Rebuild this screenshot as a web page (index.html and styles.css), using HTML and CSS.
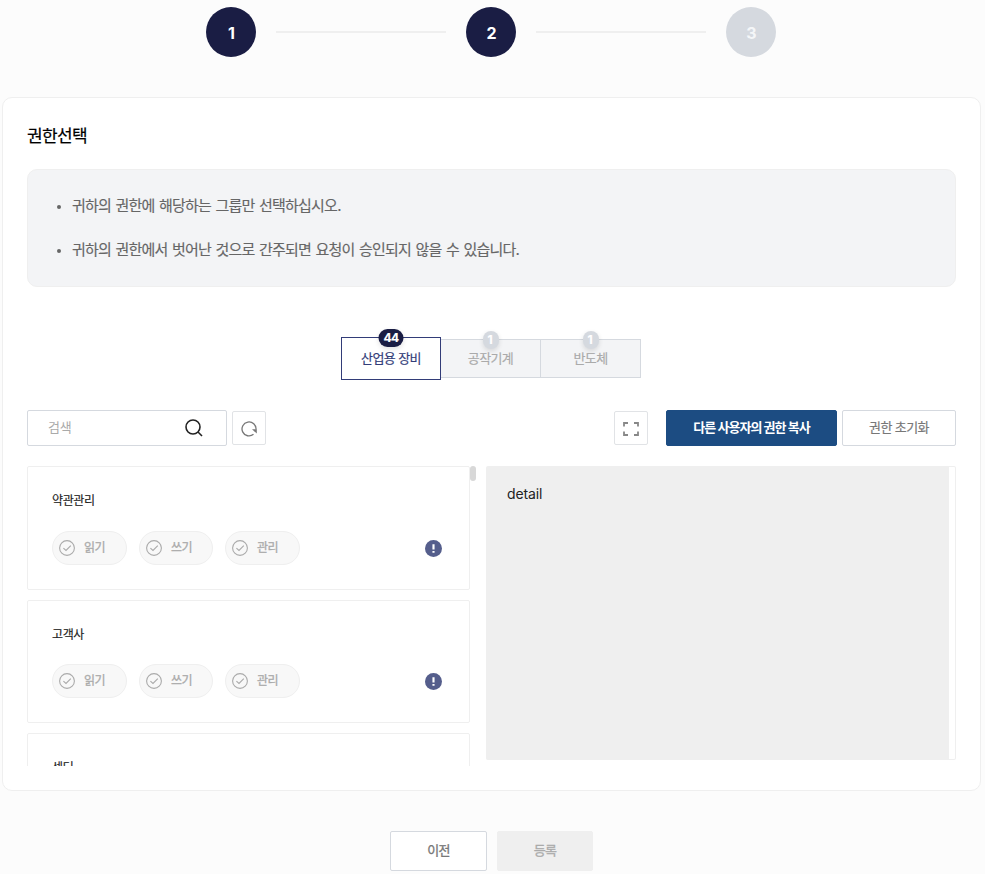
FILE: index.html
```html
<!DOCTYPE html>
<html lang="ko">
<head>
<meta charset="utf-8">
<title>권한선택</title>
<link rel="stylesheet" href="styles.css">
</head>
<body>
<svg class="sprite" aria-hidden="true">
  <symbol id="check" viewBox="0 0 16 16"><circle cx="8" cy="8" r="7.4"/><path d="M4.4 8.1 7 10.5 11.8 5.6"/></symbol>
</svg>
<ol class="steps">
  <li class="step done">1</li>
  <li class="line"></li>
  <li class="step done">2</li>
  <li class="line"></li>
  <li class="step">3</li>
</ol>
<main class="card">
  <h1 class="title">권한선택</h1>
  <ul class="notice">
    <li><span>귀하의 권한에 해당하는 그룹만 선택하십시오.</span></li>
    <li><span>귀하의 권한에서 벗어난 것으로 간주되면 요청이 승인되지 않을 수 있습니다.</span></li>
  </ul>
  <nav class="tabs">
    <a class="tab active"><span class="badge">44</span><span>산업용 장비</span></a>
    <a class="tab"><span class="badge">1</span><span>공작기계</span></a>
    <a class="tab"><span class="badge">1</span><span>반도체</span></a>
  </nav>
  <div class="toolbar">
    <div class="search">
      <span>검색</span>
      <svg width="18" height="18" viewBox="0 0 18 18"><circle cx="8" cy="8" r="7"/><path d="M13 13 17 17"/></svg>
    </div>
    <button class="icon-btn refresh"><svg width="16" height="16" viewBox="0 0 16 16"><path d="M12.5 13.3A7 7 0 1 1 15 8.5"/><path class="fill" d="M11 8.3H15.8V12.6Z"/></svg></button>
    <button class="icon-btn expand"><svg width="16" height="14" viewBox="0 0 16 14"><path d="M1 4.5V1H5M11 1H15V4.5M15 9.5V13H11M5 13H1V9.5"/></svg></button>
    <button class="btn primary"><span>다른 사용자의 권한 복사</span></button>
    <button class="btn reset"><span>권한 초기화</span></button>
  </div>
  <div class="panes">
    <div class="list">
      <div class="items">
        <section class="item">
          <h2>약관관리</h2>
          <div class="row">
            <span class="pill"><svg><use href="#check"/></svg><span>읽기</span></span>
            <span class="pill mid"><svg><use href="#check"/></svg><span>쓰기</span></span>
            <span class="pill"><svg><use href="#check"/></svg><span>관리</span></span>
            <svg class="info" width="17" height="17" viewBox="0 0 16 16"><circle cx="8" cy="8" r="8"/><path d="M7 4H9V9H7ZM7 10.3H9V12H7Z"/></svg>
          </div>
        </section>
        <section class="item second">
          <h2>고객사</h2>
          <div class="row">
            <span class="pill"><svg><use href="#check"/></svg><span>읽기</span></span>
            <span class="pill mid"><svg><use href="#check"/></svg><span>쓰기</span></span>
            <span class="pill"><svg><use href="#check"/></svg><span>관리</span></span>
            <svg class="info" width="17" height="17" viewBox="0 0 16 16"><circle cx="8" cy="8" r="8"/><path d="M7 4H9V9H7ZM7 10.3H9V12H7Z"/></svg>
          </div>
        </section>
        <section class="item">
          <h2>센터</h2>
        </section>
      </div>
      <div class="thumb"></div>
    </div>
    <div class="detail"><div class="detail-body">detail</div></div>
  </div>
</main>
<footer class="actions">
  <button class="btn prev"><span>이전</span></button>
  <button class="btn submit"><span>등록</span></button>
</footer>
</body>
</html>
```
FILE: styles.css
```css
* { box-sizing: border-box; }
body {
  margin: 0;
  height: 874px;
  overflow: hidden;
  background: #fcfcfc;
  color: #111;
  font-family: Inter, "Noto Sans CJK KR", sans-serif;
  font-size: 13px;
  letter-spacing: -0.6px;
}
.sprite { display: none; }
svg { fill: none; flex: none; }
button { font: inherit; letter-spacing: inherit; padding: 0; cursor: pointer; }
.steps {
  display: flex;
  align-items: center;
  justify-content: center;
  gap: 20px;
  list-style: none;
  margin: 0;
  padding: 7px 3px 0 0;
  height: 57px;
}
.step {
  width: 50px;
  height: 50px;
  padding-left: 1px;
  border-radius: 50%;
  background: #d5d9df;
  color: #f4f6f8;
  font-size: 16px;
  font-weight: 700;
  line-height: 52px;
  text-align: center;
  letter-spacing: 0;
}
.step.done { background: #1a1d44; color: #fff; }
.line { width: 170px; height: 2px; background: #efefef; }
.card {
  margin: 40px 4px 0 2px;
  height: 694px;
  padding: 0 24px;
  background: #fff;
  border: 1px solid #efefef;
  border-radius: 10px;
}
.title {
  margin: 26px 0 20px;
  height: 25px;
  line-height: 25px;
  font-size: 17px;
  font-weight: 400;
  letter-spacing: -0.6px;
  color: #000;
  -webkit-text-stroke: .2px #000;
}
.notice {
  margin: 0;
  height: 118px;
  padding: 20px 0 0 27px;
  list-style: none;
  background: #f3f4f6;
  border: 1px solid #efefef;
  border-radius: 10px;
  color: #666;
  font-size: 15px;
  letter-spacing: -0.78px;
  word-spacing: 1px;
  -webkit-text-stroke: .15px #666;
}
.notice li { display: flex; align-items: center; height: 28px; margin-bottom: 16px; }
.notice li::before {
  content: "";
  width: 4px;
  height: 4px;
  margin: 5px 11px 0 2px;
  border-radius: 50%;
  background: #666;
}
.tabs { display: flex; align-items: center; justify-content: center; height: 43px; margin: 50px 0 30px; padding-right: 1px; }
.tab {
  position: relative;
  display: flex;
  align-items: center;
  justify-content: center;
  width: 100px;
  height: 39px;
  padding-bottom: 3px;
  background: #f3f4f6;
  border: 1px solid #d5d9df;
  border-left: 0;
  color: #aaa;
  -webkit-text-stroke: .15px currentColor;
}
.tab.active { height: 43px; background: #fff; border: 1px solid #323c78; color: #323c78; }
.badge {
  position: absolute;
  top: -9px;
  left: 50%;
  transform: translateX(-50%);
  min-width: 16px;
  height: 18px;
  padding: 0 5px;
  border-radius: 9px;
  background: #d5d9df;
  color: #fff;
  font-size: 12px;
  font-weight: 700;
  line-height: 18px;
  letter-spacing: -0.6px;
  box-shadow: 0 2px 5px rgba(0, 0, 0, .12);
}
.active .badge { background: #1a1d44; }
.toolbar { display: flex; align-items: center; height: 36px; }
.search {
  display: flex;
  align-items: center;
  justify-content: space-between;
  width: 200px;
  height: 36px;
  padding: 0 23px 0 20px;
  border: 1px solid #d5d9df;
  border-radius: 2px;
  color: #aaa;
}
.search span { padding-bottom: 3px; letter-spacing: -0.2px; }
.search svg { stroke: #222; stroke-width: 1.6; }
.icon-btn {
  display: flex;
  align-items: center;
  justify-content: center;
  width: 34px;
  height: 34px;
  margin-left: 5px;
  background: #fff;
  border: 1px solid #e1e3e6;
  border-radius: 2px;
}
.icon-btn svg { stroke: #777; stroke-width: 1.3; margin-top: 2px; }
.icon-btn .fill { fill: #777; stroke: none; }
.icon-btn.expand { margin-left: auto; }
.icon-btn.expand svg { stroke: #888; stroke-width: 1.8; }
.btn {
  display: flex;
  align-items: center;
  justify-content: center;
  height: 36px;
  padding-bottom: 3px;
  background: #fff;
  border: 1px solid #d5d9df;
  border-radius: 2px;
  color: #777;
  -webkit-text-stroke: .15px currentColor;
}
.btn.primary { width: 171px; margin: 0 5px 0 18px; background: #1c4c82; border-color: #1c4c82; color: #fff; font-weight: 700; letter-spacing: -0.95px; -webkit-text-stroke: 0; }
.reset { width: 114px; }
.panes { display: flex; justify-content: space-between; margin-top: 20px; height: 301px; }
.list { display: flex; width: 450px; height: 301px; }
.items { width: 443px; height: 300px; overflow: hidden; }
.item { height: 124px; margin-bottom: 10px; padding: 24px; border: 1px solid #efefef; border-radius: 2px; }
.item.second { height: 123px; }
.item h2 { margin: 0 0 21px; height: 19px; line-height: 19px; font-size: 12px; font-weight: 400; letter-spacing: -0.4px; color: #222; -webkit-text-stroke: .15px #222; }
.row { display: flex; align-items: center; gap: 12px; }
.item.second .row { margin-top: -1px; }
.pill {
  display: flex;
  align-items: center;
  gap: 9px;
  width: 75px;
  height: 34px;
  padding-left: 6px;
  background: #f8f8f8;
  border: 1px solid #efefef;
  border-radius: 17px;
  color: #aaa;
  font-size: 12px;
}
.pill > span { padding-bottom: 3px; -webkit-text-stroke: .3px #aaa; }
.pill.mid { width: 74px; }
.pill svg { width: 16px; height: 16px; stroke: #aaa; stroke-width: 1.1; }
.info { margin: 0 3px 0 auto; }
.info circle { fill: #555e8c; }
.info path { fill: #fff; }
.thumb { width: 6px; height: 15px; border-radius: 3px; background: #d8d8d8; }
.detail { width: 470px; height: 294px; padding-right: 6px; background: linear-gradient(#efefef, #efefef) 0 0 / 463px 100% no-repeat border-box; border: 1px solid #efefef; border-radius: 2px; border-left: 0; }
.detail-body { padding: 17px 21px; color: #222; font-size: 14px; line-height: 20px; letter-spacing: -0.15px; }
.actions { display: flex; justify-content: center; gap: 10px; margin-top: 40px; padding-right: 2px; }
.actions .btn { width: 97px; height: 40px; -webkit-text-stroke: .3px currentColor; }
.actions .submit { width: 96px; background: #efefef; border-color: #efefef; color: #aaa; }
```
